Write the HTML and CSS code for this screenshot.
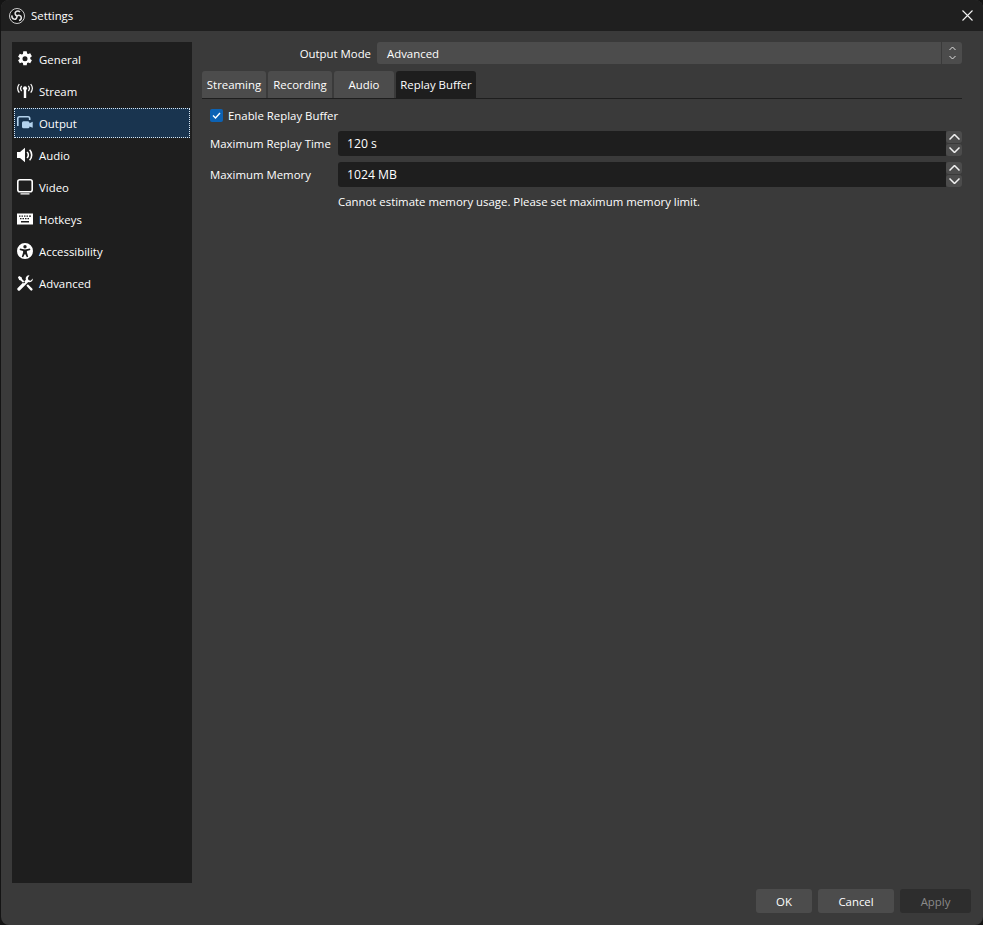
FILE: index.html
```html
<!DOCTYPE html>
<html lang="en">
<head>
  <meta charset="UTF-8" />
  <title>Settings</title>
  <link rel="stylesheet" href="styles.css">
</head>
<body>
<div class="window">

  <!-- Title bar -->
  <div class="titlebar">
    <svg class="logo" viewBox="0 0 16 16" width="16" height="16">
      <circle cx="8" cy="8" r="7.500" fill="#141414" stroke="#cfcfcf" stroke-width="1"/>
      <g fill="none" stroke="#e2e2e2" stroke-width="1.500">
        <path d="M8 8C6 7 5.500 5 6.800 3.800C8 2.800 10 3 11 4"/>
        <path d="M8 8C6 7 5.500 5 6.800 3.800C8 2.800 10 3 11 4" transform="rotate(120 8 8)"/>
        <path d="M8 8C6 7 5.500 5 6.800 3.800C8 2.800 10 3 11 4" transform="rotate(240 8 8)"/>
      </g>
    </svg>
    <span class="title">Settings</span>
    <svg class="close" viewBox="0 0 11 11" width="11" height="11">
      <path d="M.5.5l10 10M10.500.5l-10 10" stroke="#f2f2f2" stroke-width="1.100" fill="none"/>
    </svg>
  </div>

  <div class="content">
    <div class="main">

      <!-- Side list -->
      <ul class="sidebar">
        <li class="nav-item">
          <svg class="nav-icon" viewBox="0 0 16 16"><path fill-rule="evenodd" fill="#fff" d="M6.300.3h3.400l.4 2.100 1.100.6 2-.8 1.700 3-1.600 1.400v1.300l1.600 1.400-1.700 3-2-.8-1.100.6-.4 2.100H6.300l-.4-2.100-1.100-.6-2 .8-1.700-3 1.600-1.400V7.100L1.100 5.700l1.700-3 2 .8 1.100-.6zM8 5.300a2.500 2.500 0 1 0 0 5a2.500 2.500 0 0 0 0-5z"/></svg>
          <span>General</span>
        </li>
        <li class="nav-item">
          <svg class="nav-icon" viewBox="0 0 16 16"><g fill="none" stroke="#fff" stroke-width="1.200"><path d="M4.700 2.800a4 4 0 0 0 0 5.200M11.300 2.800a4 4 0 0 1 0 5.200M2.300 1a7 7 0 0 0 0 8.600M13.700 1a7 7 0 0 1 0 8.600"/></g><circle cx="8" cy="5.300" r="2" fill="#fff"/><path d="M6.800 6h2.400v9H6.800z" fill="#fff"/></svg>
          <span>Stream</span>
        </li>
        <li class="nav-item active">
          <svg class="nav-icon" viewBox="0 0 16 16"><path d="M.8 11V3.500Q.8 1.800 2.500 1.800h8.500Q12.700 1.800 12.700 3.500V5" fill="none" stroke="#b4d3ee" stroke-width="1.600"/><path d="M5 7.800Q5 6.300 6.500 6.300h4.500Q12.500 6.300 12.500 7.800v.4l3.200-1.400v6l-3.200-1.400v.4q0 1.500-1.500 1.500H6.500Q5 13.300 5 11.800z" fill="#b4d3ee"/></svg>
          <span>Output</span>
        </li>
        <li class="nav-item">
          <svg class="nav-icon" viewBox="0 0 16 16"><path d="M0 5h3L8 .8v14.400L3 11H0z" fill="#fff"/><path d="M10 5a4 4 0 0 1 0 6M12.600 2.800a7.500 7.500 0 0 1 0 10.400" fill="none" stroke="#fff" stroke-width="1.600"/></svg>
          <span>Audio</span>
        </li>
        <li class="nav-item">
          <svg class="nav-icon" viewBox="0 0 16 16"><rect x=".8" y=".8" width="14.400" height="11.900" rx="2" fill="none" stroke="#fff" stroke-width="1.600"/><path d="M3.500 14.800h9" stroke="#fff" stroke-width="1.200"/></svg>
          <span>Video</span>
        </li>
        <li class="nav-item">
          <svg class="nav-icon" viewBox="0 0 16 16"><path fill-rule="evenodd" fill="#fff" d="M0 2.500h16v11H0zM2 4.500v1.300h1.500V4.500zm2.500 0v1.300H6V4.500zM7 4.500v1.300h1.500V4.500zm2.500 0v1.300H11V4.500zM12 4.500v1.300h2V4.500zM3 7v1.300h1.500V7zm2.500 0v1.300H7V7zM8 7v1.300h1.500V7zm2.500 0v1.300H12V7zM4 10v1.500h8V10z"/></svg>
          <span>Hotkeys</span>
        </li>
        <li class="nav-item">
          <svg class="nav-icon" viewBox="0 0 16 16"><path fill-rule="evenodd" fill="#fff" d="M8 0a8 8 0 1 1 0 16A8 8 0 0 1 8 0zM8 2a1.700 1.700 0 1 0 0 3.400A1.700 1.700 0 0 0 8 2zM3 5.600l-.4 1.400 3.500 1.100v1.400L4.800 13.800l1.300.5L8 10.800l1.900 3.500 1.300-.5-1.300-4.300V8.100L13.400 7 13 5.600 8 6.600z"/></svg>
          <span>Accessibility</span>
        </li>
        <li class="nav-item">
          <svg class="nav-icon" viewBox="0 0 16 16"><path fill="#fff" d="M.9 2.200L2.200.9l2.600 1.600.2 1.600 3.200 3.200-1.300 1.300L3.700 5.400 2.200 5.100zM12.500.2a3.400 3.400 0 0 0-3.600 4.500L.7 12.900a1.700 1.700 0 0 0 2.400 2.400l8.200-8.200a3.400 3.400 0 0 0 4.500-3.600l-2.200 2.200-2.200-.6-.6-2.200zM9.400 10.800l1.500-1.500 4.300 4.200a1.100 1.100 0 0 1-1.700 1.700z"/></svg>
          <span>Advanced</span>
        </li>
      </ul>

      <!-- Output page -->
      <div class="panel">
        <div class="mode-row">
          <label class="mode-label">Output Mode</label>
          <div class="select">
            <span class="select-value">Advanced</span>
            <span class="select-btn">
              <svg viewBox="0 0 7 14" width="7" height="14"><path d="M.5 4L3.500 1l3 3M.5 10l3 3 3-3" fill="none" stroke="#e0e0e0" stroke-width="1"/></svg>
            </span>
          </div>
        </div>

        <div class="tabs">
          <div class="tab tab-streaming">Streaming</div>
          <div class="tab tab-recording">Recording</div>
          <div class="tab tab-audio">Audio</div>
          <div class="tab tab-replay active">Replay Buffer</div>
        </div>

        <div class="tab-page">
          <div class="check-row">
            <span class="checkbox">
              <svg viewBox="0 0 13 13" width="13" height="13"><path d="M3 6.500l2.500 2.500 4.500-5" fill="none" stroke="#fff" stroke-width="1.400"/></svg>
            </span>
            <span>Enable Replay Buffer</span>
          </div>

          <div class="form-row">
            <label class="form-label">Maximum Replay Time</label>
            <div class="spin">
              <div class="spin-value">120 s</div>
              <div class="spin-btns">
                <span class="spin-btn"><svg viewBox="0 0 11 6" width="11" height="6"><path d="M.5 5.500l5-5 5 5" fill="none" stroke="#f0f0f0" stroke-width="1.500"/></svg></span>
                <span class="spin-btn"><svg viewBox="0 0 11 6" width="11" height="6"><path d="M.5.500l5 5 5-5" fill="none" stroke="#f0f0f0" stroke-width="1.500"/></svg></span>
              </div>
            </div>
          </div>

          <div class="form-row">
            <label class="form-label">Maximum Memory</label>
            <div class="spin">
              <div class="spin-value">1024 MB</div>
              <div class="spin-btns">
                <span class="spin-btn"><svg viewBox="0 0 11 6" width="11" height="6"><path d="M.5 5.500l5-5 5 5" fill="none" stroke="#f0f0f0" stroke-width="1.500"/></svg></span>
                <span class="spin-btn"><svg viewBox="0 0 11 6" width="11" height="6"><path d="M.5.500l5 5 5-5" fill="none" stroke="#f0f0f0" stroke-width="1.500"/></svg></span>
              </div>
            </div>
          </div>

          <p class="hint">Cannot estimate memory usage. Please set maximum memory limit.</p>
        </div>
      </div>
    </div>

    <!-- Dialog buttons -->
    <div class="footer">
      <button class="btn btn-ok">OK</button>
      <button class="btn btn-cancel">Cancel</button>
      <button class="btn btn-apply">Apply</button>
    </div>
  </div>
</div>
</body>
</html>
```

FILE: styles.css
```css
/* ---------- Page ---------- */
html,body{height:100%}
body{
  margin:0;
  background:#141414;
  color:#fff;
  font-family:"Open Sans","Noto Sans",sans-serif;
  font-size:11.4px;
  overflow:hidden;
}
.window{
  height:925px;
  margin-left:1px;
  display:flex;
  flex-direction:column;
  background:#3a3a3a;
  border-radius:8px;
  overflow:hidden;
}

/* ---------- Title bar ---------- */
.titlebar{
  height:31px;
  flex:none;
  display:flex;
  align-items:center;
  padding:0 10px 0 8px;
  background:#1f1f1f;
}
.logo{flex:none;margin-right:6px}
.title{flex:1}
.close{flex:none}

/* ---------- Layout ---------- */
.content{flex:1;display:flex;flex-direction:column;padding:11px 12px 12px 11px;min-height:0}
.main{flex:1;display:flex;gap:10px;min-height:0}

/* ---------- Side list ---------- */
.sidebar{
  width:180px;
  box-sizing:border-box;
  margin:0;
  padding:2px;
  list-style:none;
  background:#1e1e1e;
  flex:none;
}
.nav-item{
  box-sizing:border-box;
  height:30px;
  margin-bottom:2px;
  display:flex;
  align-items:center;
  gap:6px;
  padding-left:2px;
  border:1px solid transparent;
}
.nav-icon{width:16px;height:16px;flex:none}
.nav-item.active{
  background:#19344f;
  border:1px dotted #d8e6f2;
}

/* ---------- Output page ---------- */
.panel{width:760px;flex:none}
.mode-row{display:flex;align-items:center;height:22px;gap:6px}
.mode-label{width:169px;text-align:right;flex:none;padding-top:1px}
.select{
  flex:1;
  height:22px;
  display:flex;
  background:#4c4c4c;
  border-radius:3px;
}
.select-value{flex:1;line-height:24px;padding-left:10px}
.select-btn{
  width:20px;
  display:flex;
  align-items:center;
  justify-content:center;
  border-left:1px solid #3a3a3a;
}

/* ---------- Tabs ---------- */
.tabs{
  display:flex;
  gap:2px;
  margin-top:7px;
  height:27px;
  border-bottom:1px solid #1e1e1e;
}
.tab{
  height:27px;
  line-height:27px;
  text-align:center;
  background:#4c4c4c;
  border-radius:3px 3px 0 0;
}
.tab-streaming{width:64px}
.tab-recording{width:64px}
.tab-audio{width:60px}
.tab-replay{width:80px}
.tab.active{background:#1e1e1e}

/* ---------- Form ---------- */
.tab-page{padding:9px 0 0 8px}
.check-row{display:flex;align-items:center;gap:5px;height:14px}
.checkbox{
  width:13px;
  height:13px;
  background:#0c62b4;
  border-radius:2px;
  display:flex;
}
.form-row{display:flex;align-items:center;height:25px;margin-top:6px}
.check-row + .form-row{margin-top:9px}
.form-label{width:128px;flex:none}
.spin{flex:1;display:flex;height:25px}
.spin-value{
  flex:1;
  font-size:12.2px;
  line-height:25px;
  padding-left:9px;
  background:#1e1e1e;
  border-radius:3px 0 0 3px;
}
.spin-btns{width:16px;display:flex;flex-direction:column;gap:1px}
.spin-btn{
  flex:1;
  background:#4c4c4c;
  border-radius:3px;
  display:flex;
  align-items:center;
  justify-content:center;
}
.hint{margin:7px 0 0 128px;line-height:16px}

/* ---------- Dialog buttons ---------- */
.footer{display:flex;justify-content:flex-end;gap:6px;height:24px;margin-top:6px}
.btn{
  height:24px;
  border:0;
  padding:0;
  background:#4c4c4c;
  color:#fff;
  font:inherit;
  border-radius:3px;
}
.btn-ok{width:56px}
.btn-cancel{width:76px}
.btn-apply{width:71px;background:#2d2d2d;color:#8a8a8a}
```
